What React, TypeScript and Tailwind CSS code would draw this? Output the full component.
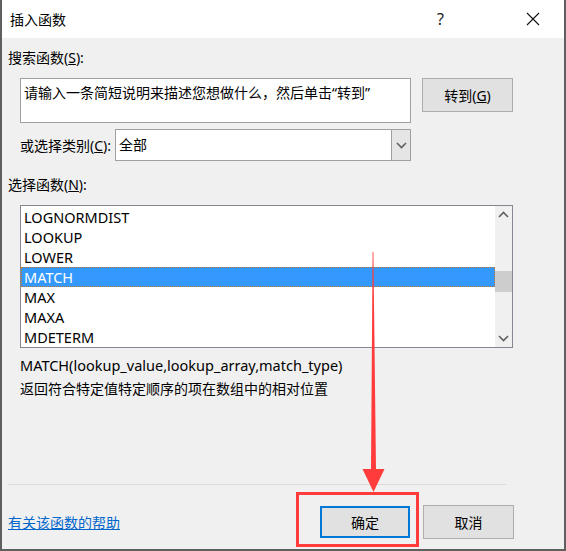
const font = {
  fontFamily: '"Noto Sans", "Noto Sans CJK SC", sans-serif',
};

const functions = [
  "LOGNORMDIST",
  "LOOKUP",
  "LOWER",
  "MATCH",
  "MAX",
  "MAXA",
  "MDETERM",
];

const Chevron = ({ up }: { up?: boolean }) => (
  <svg width="11" height="7" viewBox="0 0 11 7">
    <path
      d={up ? "M1 6 L5.5 1.5 L10 6" : "M1 1 L5.5 5.5 L10 1"}
      fill="none"
      stroke="#606060"
      strokeWidth="1.6"
    />
  </svg>
);

const FunctionList = ({ selected }: { selected: string }) => (
  <div className="ml-[12px] mt-[10px] flex h-[143px] w-[493px] border border-[#828790] bg-white">
    <div className="flex flex-1 flex-col pt-[1px] text-[14.5px] leading-[20px] text-black">
      {functions.map((name) =>
        name === selected ? (
          <div
            key={name}
            className="h-[20px] border border-dotted border-[#c07830] bg-[#3399ff] pl-[2px] leading-[18px] text-white"
          >
            {name}
          </div>
        ) : (
          <div key={name} className="h-[20px] pl-[3px]">
            {name}
          </div>
        )
      )}
    </div>
    <div className="flex w-[17px] flex-col bg-[#f0f0f0]">
      <div className="flex h-[17px] items-center justify-center">
        <Chevron up />
      </div>
      <div className="mt-[48px] h-[21px] bg-[#cdcdcd]" />
      <div className="flex-1" />
      <div className="flex h-[17px] items-center justify-center">
        <Chevron />
      </div>
    </div>
  </div>
);

export default function App() {
  return (
    <div
      className="relative flex h-[551px] w-[566px] flex-col border-b-2 border-l-2 border-r-2 border-[#5f5f5f] bg-[#f0f0f0] text-[14px] text-black"
      style={font}
    >
      {/* title bar */}
      <div className="flex h-[38px] items-center bg-white pl-[8px]">
        <span className="flex-1">插入函数</span>
        <span className="mr-[82px] text-[16px] text-[#222]">?</span>
        <svg width="14" height="14" viewBox="0 0 14 14" className="mr-[24px]">
          <path d="M1 1 L13 13 M13 1 L1 13" stroke="#111" strokeWidth="1.1" />
        </svg>
      </div>

      <div className="flex flex-1 flex-col pl-[6px]">
        <div className="mt-[10px] h-[20px] leading-[20px]">
          搜索函数(<span className="underline">S</span>):
        </div>

        <div className="mt-[10px] flex items-start">
          <div className="ml-[12px] h-[45px] w-[391px] border border-[#a0a0a0] bg-white px-[3px] pt-[4px] leading-[20px]">
            请输入一条简短说明来描述您想做什么，然后单击“转到”
          </div>
          <button className="ml-[11px] h-[34px] w-[91px] border border-[#adadad] bg-[#e1e1e1]">
            转到(<span className="underline">G</span>)
          </button>
        </div>

        <div className="mt-[6px] flex items-center">
          <span className="ml-[12px] w-[95px]">
            或选择类别(<span className="underline">C</span>):
          </span>
          <div className="flex h-[32px] w-[296px] border border-[#a0a0a0] bg-white">
            <span className="flex-1 pl-[3px] leading-[30px]">全部</span>
            <div className="flex w-[19px] items-center justify-center border-l border-[#a0a0a0] bg-[#e5e5e5]">
              <Chevron />
            </div>
          </div>
        </div>

        <div className="mt-[14px] h-[20px] leading-[20px]">
          选择函数(<span className="underline">N</span>):
        </div>

        <FunctionList selected="MATCH" />

        <div className="ml-[12px] mt-[7px] h-[20px] text-[14.5px] leading-[20px]">
          MATCH(lookup_value,lookup_array,match_type)
        </div>
        <div className="ml-[12px] mt-[4px] h-[20px] leading-[20px]">
          返回符合特定值特定顺序的项在数组中的相对位置
        </div>

        <div className="flex-1" />
        <div className="mr-[58px] h-px bg-[#dadada]" />

        <div className="mb-[10px] mt-[20px] flex items-center">
          <a className="flex-1 text-[#0066cc] underline">有关该函数的帮助</a>
          <button className="h-[32px] w-[90px] border-2 border-[#0078d7] bg-[#e1e1e1]">
            确定
          </button>
          <button className="ml-[13px] mr-[50px] h-[34px] w-[91px] border border-[#adadad] bg-[#e1e1e1]">
            取消
          </button>
        </div>
      </div>

      {/* annotation: arrow and highlight box */}
      <svg
        className="pointer-events-none absolute left-[-2px] top-0"
        width="566"
        height="551"
        viewBox="0 0 566 551"
      >
        <path d="M372.6 252 L373.4 252 L376 470 L371 470 Z" fill="#ff3b3b" />
        <path d="M362.5 469 L384.5 469 L373.5 492 Z" fill="#ff3b3b" />
        <rect
          x="297.5"
          y="493.5"
          width="120"
          height="52"
          fill="none"
          stroke="#ff3b3b"
          strokeWidth="3"
        />
      </svg>
    </div>
  );
}
